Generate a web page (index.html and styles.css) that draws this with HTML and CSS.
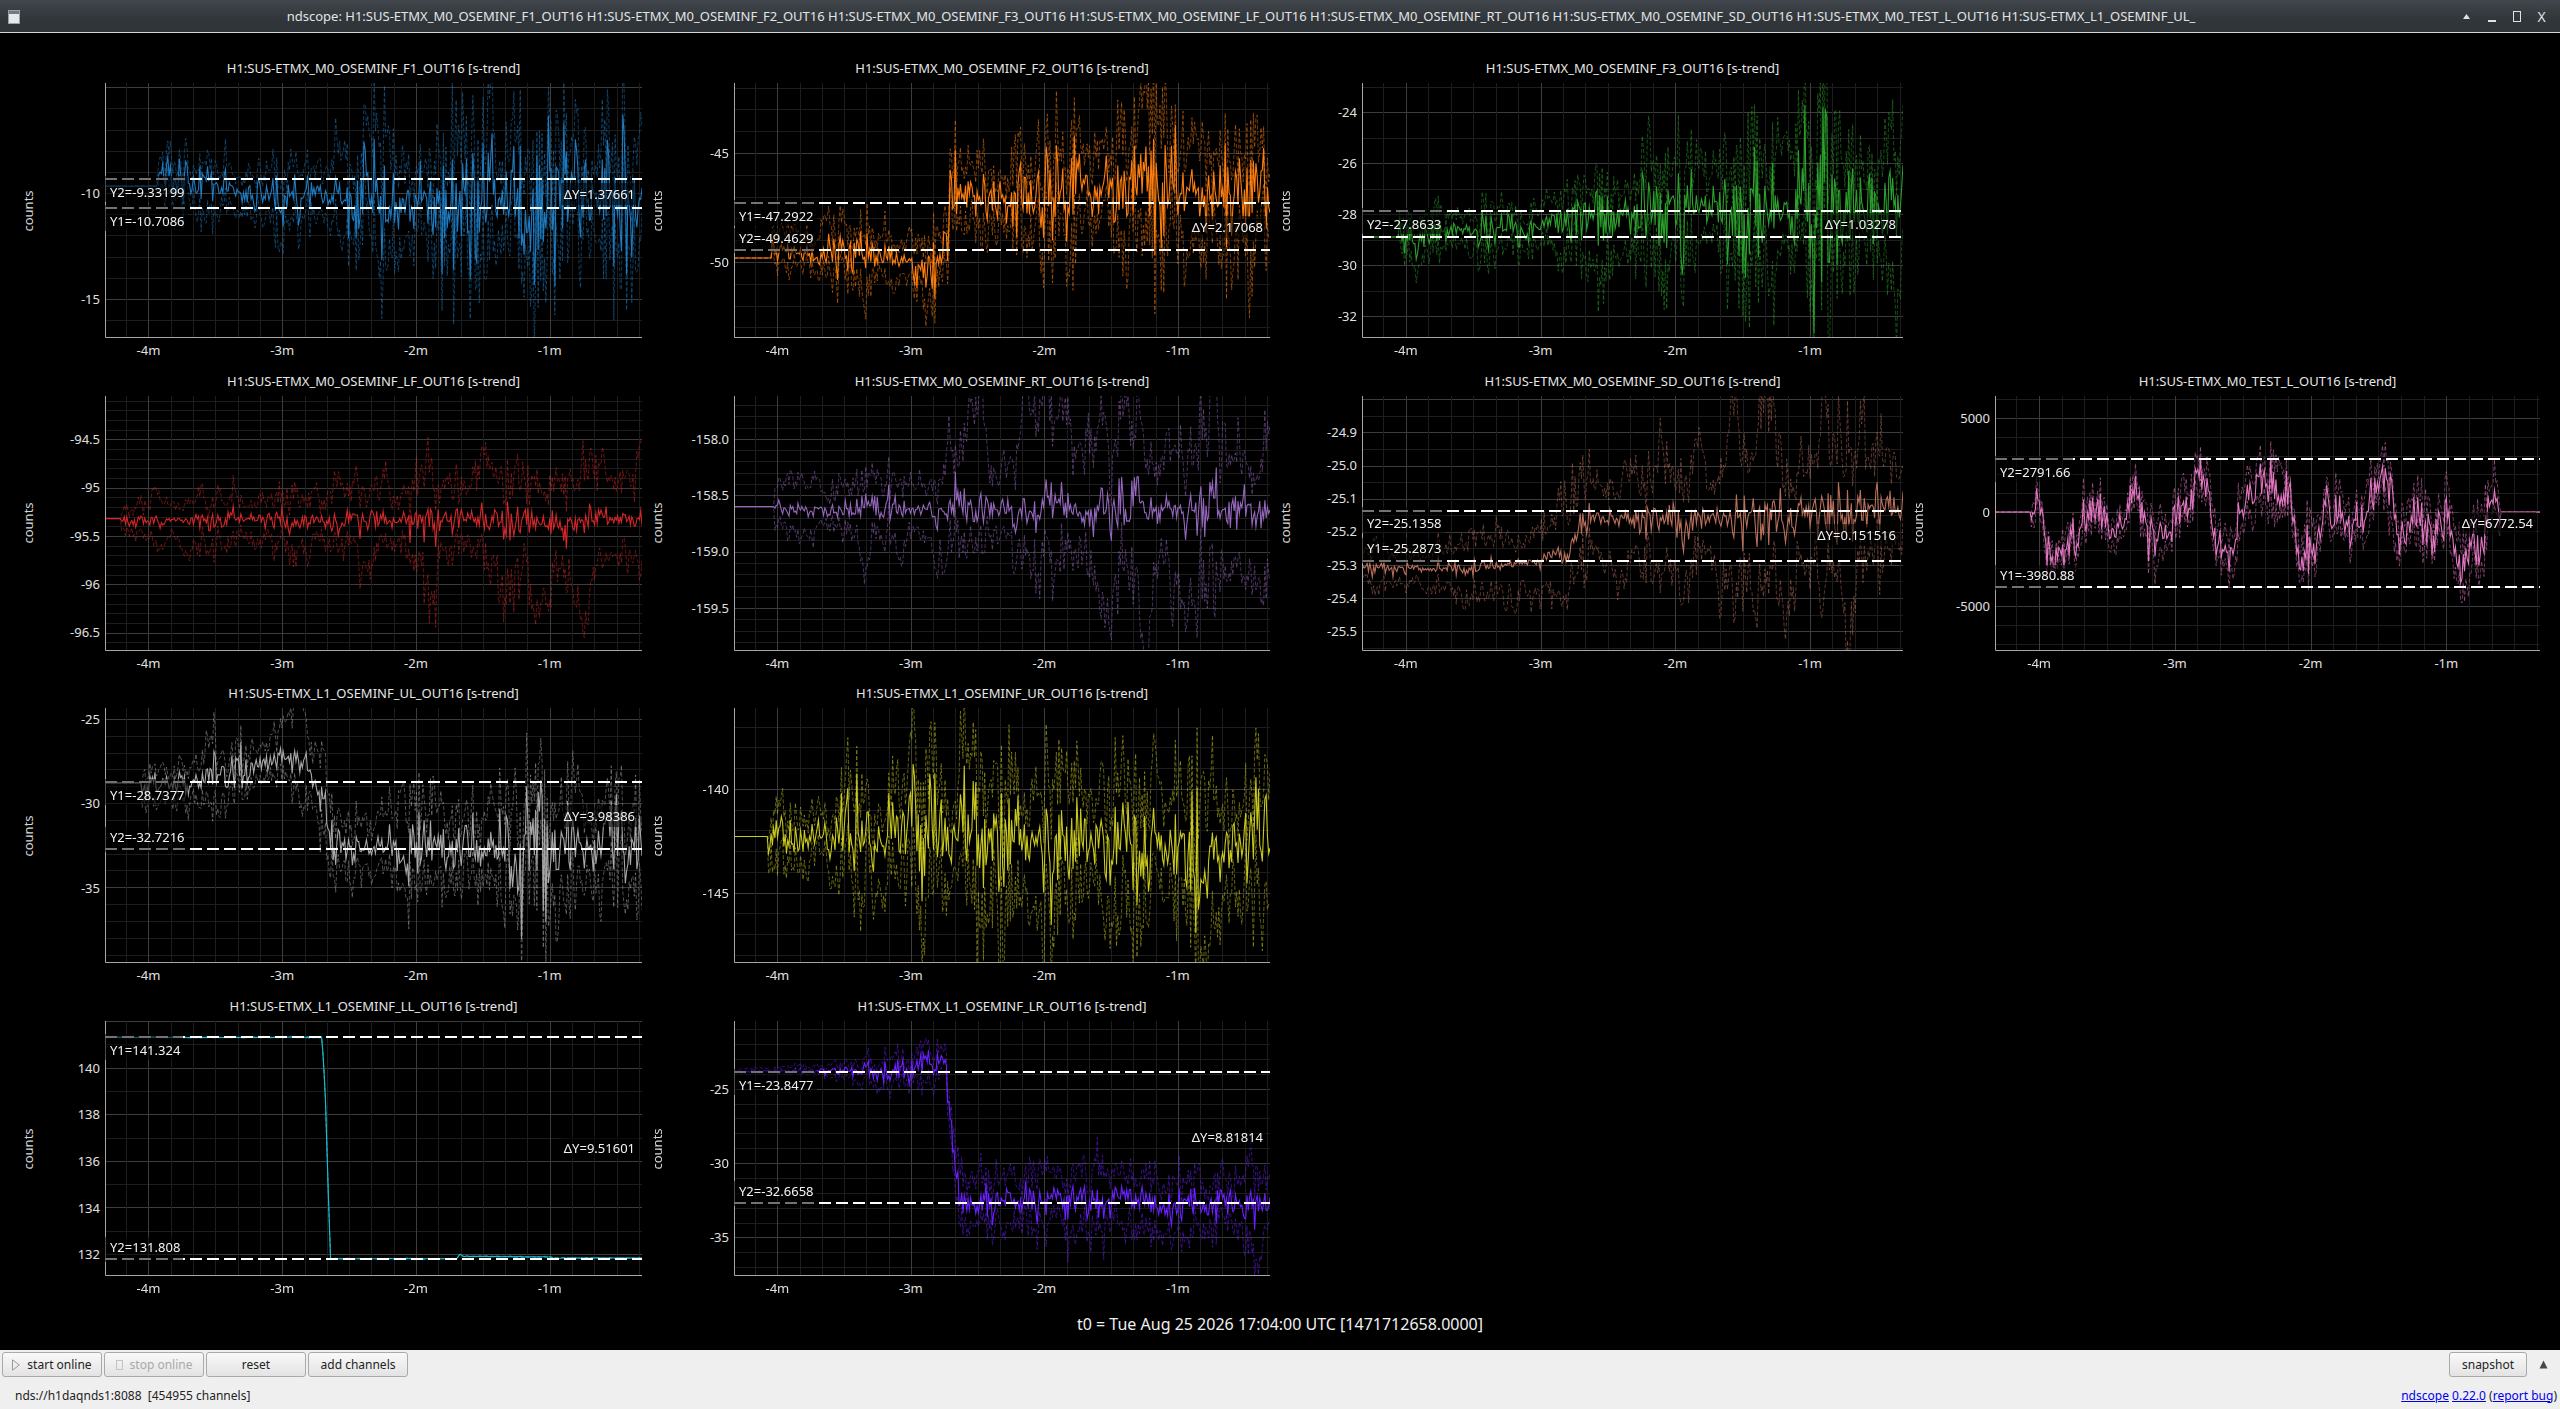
FILE: index.html
```html
<!DOCTYPE html>
<html lang="en">
<head>
<meta charset="utf-8">
<title>ndscope</title>
<link rel="stylesheet" href="styles.css">
</head>
<body>
<div class="window">
  <header class="titlebar">
    <div class="tb-icon">
      <svg width="12" height="14" viewBox="0 0 12 14"><rect x="0.5" y="0.5" width="11" height="13" fill="#e6e8ea" stroke="#9aa0a6"/><rect x="1" y="1" width="10" height="3" fill="#6d7a88"/></svg>
    </div>
    <div class="tb-title">ndscope: H1:SUS-ETMX_M0_OSEMINF_F1_OUT16 H1:SUS-ETMX_M0_OSEMINF_F2_OUT16 H1:SUS-ETMX_M0_OSEMINF_F3_OUT16 H1:SUS-ETMX_M0_OSEMINF_LF_OUT16 H1:SUS-ETMX_M0_OSEMINF_RT_OUT16 H1:SUS-ETMX_M0_OSEMINF_SD_OUT16 H1:SUS-ETMX_M0_TEST_L_OUT16 H1:SUS-ETMX_L1_OSEMINF_UL_</div>
    <div class="tb-controls">
      <span class="tbc"><svg width="7" height="5" viewBox="0 0 7 5"><path d="M3.5 0 L7 5 L0 5 Z" fill="#dfe1e3"/></svg></span>
      <span class="tbc"><span class="tbc-min"></span></span>
      <span class="tbc"><span class="tbc-max"></span></span>
      <span class="tbc tbc-x">X</span>
    </div>
  </header>

  <main class="main">
    <div class="plots">

      <section class="plot" data-id="f1">
        <h2 class="ptitle">H1:SUS-ETMX_M0_OSEMINF_F1_OUT16 [s-trend]</h2>
        <div class="ylabel"><span>counts</span></div>
        <div class="yaxis"><span class="ytick" data-v="-10">-10</span><span class="ytick" data-v="-15">-15</span></div>
        <div class="area"><canvas></canvas>
          <span class="clabel below" data-v="-9.33199">Y2=-9.33199</span>
          <span class="clabel below" data-v="-10.7086">Y1=-10.7086</span>
          <span class="dlabel" data-a="-9.33199" data-b="-10.7086">ΔY=1.37661</span>
        </div>
        <div class="xaxis"><span class="xtick" data-t="-4">-4m</span><span class="xtick" data-t="-3">-3m</span><span class="xtick" data-t="-2">-2m</span><span class="xtick" data-t="-1">-1m</span></div>
      </section>

      <section class="plot" data-id="f2">
        <h2 class="ptitle">H1:SUS-ETMX_M0_OSEMINF_F2_OUT16 [s-trend]</h2>
        <div class="ylabel"><span>counts</span></div>
        <div class="yaxis"><span class="ytick" data-v="-45">-45</span><span class="ytick" data-v="-50">-50</span></div>
        <div class="area"><canvas></canvas>
          <span class="clabel below" data-v="-47.2922">Y1=-47.2922</span>
          <span class="clabel above" data-v="-49.4629">Y2=-49.4629</span>
          <span class="dlabel" data-a="-47.2922" data-b="-49.4629">ΔY=2.17068</span>
        </div>
        <div class="xaxis"><span class="xtick" data-t="-4">-4m</span><span class="xtick" data-t="-3">-3m</span><span class="xtick" data-t="-2">-2m</span><span class="xtick" data-t="-1">-1m</span></div>
      </section>

      <section class="plot" data-id="f3">
        <h2 class="ptitle">H1:SUS-ETMX_M0_OSEMINF_F3_OUT16 [s-trend]</h2>
        <div class="ylabel"><span>counts</span></div>
        <div class="yaxis"><span class="ytick" data-v="-24">-24</span><span class="ytick" data-v="-26">-26</span><span class="ytick" data-v="-28">-28</span><span class="ytick" data-v="-30">-30</span><span class="ytick" data-v="-32">-32</span></div>
        <div class="area"><canvas></canvas>
          <span class="clabel below" data-v="-27.8633">Y2=-27.8633</span>
          <span class="dlabel" data-a="-27.8633" data-b="-28.89608">ΔY=1.03278</span>
        </div>
        <div class="xaxis"><span class="xtick" data-t="-4">-4m</span><span class="xtick" data-t="-3">-3m</span><span class="xtick" data-t="-2">-2m</span><span class="xtick" data-t="-1">-1m</span></div>
      </section>

      <div class="empty"></div>

      <section class="plot" data-id="lf">
        <h2 class="ptitle">H1:SUS-ETMX_M0_OSEMINF_LF_OUT16 [s-trend]</h2>
        <div class="ylabel"><span>counts</span></div>
        <div class="yaxis"><span class="ytick" data-v="-94.5">-94.5</span><span class="ytick" data-v="-95">-95</span><span class="ytick" data-v="-95.5">-95.5</span><span class="ytick" data-v="-96">-96</span><span class="ytick" data-v="-96.5">-96.5</span></div>
        <div class="area"><canvas></canvas></div>
        <div class="xaxis"><span class="xtick" data-t="-4">-4m</span><span class="xtick" data-t="-3">-3m</span><span class="xtick" data-t="-2">-2m</span><span class="xtick" data-t="-1">-1m</span></div>
      </section>

      <section class="plot" data-id="rt">
        <h2 class="ptitle">H1:SUS-ETMX_M0_OSEMINF_RT_OUT16 [s-trend]</h2>
        <div class="ylabel"><span>counts</span></div>
        <div class="yaxis"><span class="ytick" data-v="-158">-158.0</span><span class="ytick" data-v="-158.5">-158.5</span><span class="ytick" data-v="-159">-159.0</span><span class="ytick" data-v="-159.5">-159.5</span></div>
        <div class="area"><canvas></canvas></div>
        <div class="xaxis"><span class="xtick" data-t="-4">-4m</span><span class="xtick" data-t="-3">-3m</span><span class="xtick" data-t="-2">-2m</span><span class="xtick" data-t="-1">-1m</span></div>
      </section>

      <section class="plot" data-id="sd">
        <h2 class="ptitle">H1:SUS-ETMX_M0_OSEMINF_SD_OUT16 [s-trend]</h2>
        <div class="ylabel"><span>counts</span></div>
        <div class="yaxis"><span class="ytick" data-v="-24.9">-24.9</span><span class="ytick" data-v="-25">-25.0</span><span class="ytick" data-v="-25.1">-25.1</span><span class="ytick" data-v="-25.2">-25.2</span><span class="ytick" data-v="-25.3">-25.3</span><span class="ytick" data-v="-25.4">-25.4</span><span class="ytick" data-v="-25.5">-25.5</span></div>
        <div class="area"><canvas></canvas>
          <span class="clabel below" data-v="-25.1358">Y2=-25.1358</span>
          <span class="clabel above" data-v="-25.2873">Y1=-25.2873</span>
          <span class="dlabel" data-a="-25.1358" data-b="-25.2873">ΔY=0.151516</span>
        </div>
        <div class="xaxis"><span class="xtick" data-t="-4">-4m</span><span class="xtick" data-t="-3">-3m</span><span class="xtick" data-t="-2">-2m</span><span class="xtick" data-t="-1">-1m</span></div>
      </section>

      <section class="plot" data-id="test">
        <h2 class="ptitle">H1:SUS-ETMX_M0_TEST_L_OUT16 [s-trend]</h2>
        <div class="ylabel"><span>counts</span></div>
        <div class="yaxis"><span class="ytick" data-v="5000">5000</span><span class="ytick" data-v="0">0</span><span class="ytick" data-v="-5000">-5000</span></div>
        <div class="area"><canvas></canvas>
          <span class="clabel below" data-v="2791.66">Y2=2791.66</span>
          <span class="clabel above" data-v="-3980.88">Y1=-3980.88</span>
          <span class="dlabel" data-a="2791.66" data-b="-3980.88">ΔY=6772.54</span>
        </div>
        <div class="xaxis"><span class="xtick" data-t="-4">-4m</span><span class="xtick" data-t="-3">-3m</span><span class="xtick" data-t="-2">-2m</span><span class="xtick" data-t="-1">-1m</span></div>
      </section>

      <section class="plot" data-id="ul">
        <h2 class="ptitle">H1:SUS-ETMX_L1_OSEMINF_UL_OUT16 [s-trend]</h2>
        <div class="ylabel"><span>counts</span></div>
        <div class="yaxis"><span class="ytick" data-v="-25">-25</span><span class="ytick" data-v="-30">-30</span><span class="ytick" data-v="-35">-35</span></div>
        <div class="area"><canvas></canvas>
          <span class="clabel below" data-v="-28.7377">Y1=-28.7377</span>
          <span class="clabel above" data-v="-32.7216">Y2=-32.7216</span>
          <span class="dlabel" data-a="-28.7377" data-b="-32.7216">ΔY=3.98386</span>
        </div>
        <div class="xaxis"><span class="xtick" data-t="-4">-4m</span><span class="xtick" data-t="-3">-3m</span><span class="xtick" data-t="-2">-2m</span><span class="xtick" data-t="-1">-1m</span></div>
      </section>

      <section class="plot" data-id="ur">
        <h2 class="ptitle">H1:SUS-ETMX_L1_OSEMINF_UR_OUT16 [s-trend]</h2>
        <div class="ylabel"><span>counts</span></div>
        <div class="yaxis"><span class="ytick" data-v="-140">-140</span><span class="ytick" data-v="-145">-145</span></div>
        <div class="area"><canvas></canvas></div>
        <div class="xaxis"><span class="xtick" data-t="-4">-4m</span><span class="xtick" data-t="-3">-3m</span><span class="xtick" data-t="-2">-2m</span><span class="xtick" data-t="-1">-1m</span></div>
      </section>

      <div class="empty"></div>
      <div class="empty"></div>

      <section class="plot" data-id="ll">
        <h2 class="ptitle">H1:SUS-ETMX_L1_OSEMINF_LL_OUT16 [s-trend]</h2>
        <div class="ylabel"><span>counts</span></div>
        <div class="yaxis"><span class="ytick" data-v="140">140</span><span class="ytick" data-v="138">138</span><span class="ytick" data-v="136">136</span><span class="ytick" data-v="134">134</span><span class="ytick" data-v="132">132</span></div>
        <div class="area"><canvas></canvas>
          <span class="clabel below" data-v="141.324">Y1=141.324</span>
          <span class="clabel above" data-v="131.808">Y2=131.808</span>
          <span class="dlabel" data-a="141.324" data-b="131.808">ΔY=9.51601</span>
        </div>
        <div class="xaxis"><span class="xtick" data-t="-4">-4m</span><span class="xtick" data-t="-3">-3m</span><span class="xtick" data-t="-2">-2m</span><span class="xtick" data-t="-1">-1m</span></div>
      </section>

      <section class="plot" data-id="lr">
        <h2 class="ptitle">H1:SUS-ETMX_L1_OSEMINF_LR_OUT16 [s-trend]</h2>
        <div class="ylabel"><span>counts</span></div>
        <div class="yaxis"><span class="ytick" data-v="-25">-25</span><span class="ytick" data-v="-30">-30</span><span class="ytick" data-v="-35">-35</span></div>
        <div class="area"><canvas></canvas>
          <span class="clabel below" data-v="-23.8477">Y1=-23.8477</span>
          <span class="clabel above" data-v="-32.6658">Y2=-32.6658</span>
          <span class="dlabel" data-a="-23.8477" data-b="-32.6658">ΔY=8.81814</span>
        </div>
        <div class="xaxis"><span class="xtick" data-t="-4">-4m</span><span class="xtick" data-t="-3">-3m</span><span class="xtick" data-t="-2">-2m</span><span class="xtick" data-t="-1">-1m</span></div>
      </section>

    </div>
    <div class="t0">t0 = Tue Aug 25 2026 17:04:00 UTC [1471712658.0000]</div>
  </main>

  <footer class="toolbar">
    <div class="tool-row">
      <div class="btns">
        <button class="btn" type="button"><svg class="ico" width="8" height="12" viewBox="0 0 8 12"><path d="M0.5 0.8 L7.3 6 L0.5 11.2 Z" fill="none" stroke="#9a9a9a" stroke-width="1"/></svg>start online</button>
        <button class="btn" type="button" disabled><svg class="ico" width="7" height="10" viewBox="0 0 7 10"><rect x="0.5" y="0.5" width="6" height="9" fill="none" stroke="#c4c4c4" stroke-width="1"/></svg>stop online</button>
        <button class="btn" type="button">reset</button>
        <button class="btn" type="button">add channels</button>
      </div>
      <div class="tools-right">
        <button class="btn btn-snap" type="button">snapshot</button>
        <svg class="arrow-up" width="9" height="9" viewBox="0 0 9 9"><path d="M4.5 0.5 L8.5 8.5 L0.5 8.5 Z" fill="#474747"/></svg>
      </div>
    </div>
    <div class="status-row">
      <span class="status">nds://h1daqnds1:8088  [454955 channels]</span>
      <span class="version"><a href="#">ndscope</a> <a href="#">0.22.0</a> (<a href="#">report bug</a>)</span>
    </div>
  </footer>
</div>
<script src="app.js"></script>
</body>
</html>
```

FILE: styles.css
```css
* { box-sizing: border-box; }

html, body {
  margin: 0;
  padding: 0;
  background: #000;
  font-family: "Noto Sans", "DejaVu Sans", sans-serif;
  overflow: hidden;
}

.window {
  width: 2560px;
  height: 1409px;
  display: flex;
  flex-direction: column;
}

/* ---------- title bar ---------- */
.titlebar {
  flex: none;
  height: 33px;
  display: flex;
  align-items: center;
  background: linear-gradient(#41464c, #31363b 60%, #2f3439);
  border-bottom: 1px solid #d3d6d9;
  color: #e2e4e6;
  font-size: 13px;
}

.tb-icon {
  width: 28px;
  display: flex;
  justify-content: center;
  align-items: center;
  padding-top: 1px;
}

.tb-title {
  flex: 1;
  text-align: center;
  white-space: nowrap;
  overflow: hidden;
}

.tb-controls {
  display: flex;
  padding-right: 6px;
}

.tbc {
  width: 25px;
  height: 20px;
  display: flex;
  justify-content: center;
  align-items: center;
  color: #dfe1e3;
  font-size: 13px;
}

.tbc-min {
  width: 8px;
  height: 2px;
  margin-top: 9px;
  background: #dfe1e3;
}

.tbc-max {
  width: 8px;
  height: 11px;
  border: 1.5px solid #dfe1e3;
}

.tbc-x { font-size: 14px; }

/* ---------- main ---------- */
.main {
  flex: 1;
  display: flex;
  flex-direction: column;
  padding-top: 21px;
  background: #000;
}

.plots {
  display: grid;
  grid-template-columns: 642px 628px 633px 1fr;
  grid-template-rows: repeat(4, 308px);
  row-gap: 4.7px;
}

.plots > :nth-child(4n+1) { padding-left: 13px; }
.plots > :nth-child(4n) { padding-right: 20px; }

.plot {
  display: grid;
  grid-template-columns: 30px 62px 1fr;
  grid-template-rows: 28px 1px 255px 24px;
  color: #e0e0e0;
  font-size: 13px;
}

.ptitle {
  grid-column: 3;
  grid-row: 1;
  margin: 0;
  font-size: 13px;
  font-weight: normal;
  line-height: 28px;
  text-align: center;
  white-space: nowrap;
  color: #e6e6e6;
}

.ylabel {
  grid-column: 1;
  grid-row: 3;
  display: flex;
  align-items: center;
  justify-content: center;
  color: #d4d4d4;
}

.ylabel span {
  transform: rotate(-90deg);
  white-space: nowrap;
  line-height: 14px;
}

.yaxis {
  grid-column: 2;
  grid-row: 3;
  position: relative;
}

.ytick {
  position: absolute;
  right: 5px;
  transform: translateY(-50%);
  line-height: 16px;
  white-space: nowrap;
  color: #e0e0e0;
}

.area {
  grid-column: 3;
  grid-row: 3;
  position: relative;
  overflow: hidden;
}

.area canvas {
  display: block;
  width: 100%;
  height: 100%;
}

.clabel, .dlabel {
  position: absolute;
  white-space: nowrap;
  line-height: 16px;
  color: #f2f2f2;
  background: rgba(0, 0, 0, 0.55);
}

.clabel {
  left: 0;
  padding: 8px 3px 2px 5px;
}

.clabel.above {
  padding: 2px 3px 7px 5px;
  transform: translateY(-100%);
}

.dlabel {
  right: 4px;
  padding: 3px 3px;
  transform: translateY(-50%);
}

.xaxis {
  grid-column: 3;
  grid-row: 4;
  position: relative;
}

.xtick {
  position: absolute;
  top: 4px;
  transform: translateX(-50%);
  line-height: 16px;
  white-space: nowrap;
  color: #e0e0e0;
}

.t0 {
  flex: 1;
  display: flex;
  align-items: center;
  justify-content: center;
  color: #f0f0f0;
  font-size: 16px;
  padding-bottom: 2px;
}

/* ---------- toolbar ---------- */
.toolbar {
  flex: none;
  height: 59px;
  background: #efefef;
  font-size: 12px;
  color: #232323;
}

.tool-row {
  display: flex;
  justify-content: space-between;
  align-items: center;
  padding: 2px 12px 0 2px;
}

.btns {
  display: flex;
  gap: 2px;
}

.btn {
  height: 25px;
  min-width: 100px;
  padding: 0 8px;
  display: flex;
  align-items: center;
  justify-content: center;
  gap: 7px;
  font-family: "Noto Sans", "DejaVu Sans", sans-serif;
  font-size: 12px;
  color: #232323;
  background: linear-gradient(#f9f9f9, #e3e3e3);
  border: 1px solid #aaaaaa;
  border-radius: 3px;
}

.btn:disabled { color: #a9a9a9; }

.btn-snap {
  min-width: 78px;
  width: 78px;
}

.tools-right {
  display: flex;
  align-items: center;
  gap: 12px;
}

.arrow-up {
  display: block;
}

.status-row {
  display: flex;
  justify-content: space-between;
  align-items: center;
  height: 32px;
  padding: 4px 3px 0 15px;
}

.status { white-space: pre; }

.version a {
  color: #0000ee;
  text-decoration: underline;
}
```

FILE: app.js
```js
(function () {
  var T0 = -4.325, T1 = -0.31, N = 420;

  function mulberry32(a) {
    return function () {
      a |= 0; a = a + 0x6D2B79F5 | 0;
      var t = Math.imul(a ^ a >>> 15, 1 | a);
      t = t + Math.imul(t ^ t >>> 7, 61 | t) ^ t;
      return ((t ^ t >>> 14) >>> 0) / 4294967296;
    };
  }

  function kp(arr) {
    if (typeof arr === 'number') return function () { return arr; };
    return function (f) {
      if (f <= arr[0][0]) return arr[0][1];
      for (var i = 1; i < arr.length; i++) {
        if (f <= arr[i][0]) {
          var f0 = arr[i - 1][0], v0 = arr[i - 1][1], f1 = arr[i][0], v1 = arr[i][1];
          return v0 + (v1 - v0) * (f - f0) / (f1 - f0);
        }
      }
      return arr[arr.length - 1][1];
    };
  }

  var CFG = {
    f1: { color: '#1f7bc0', range: [-16.84, -4.8], major: 5, minor: 1, start: 0.096, flat: -9.67,
      base: [[0.096, -9.0], [0.15, -9.4], [0.25, -10.0], [0.5, -10.4], [0.7, -10.3], [1, -10.5]],
      amp: [[0, 0.35], [0.3, 0.45], [0.72, 1.8], [1, 1.6]],
      spr: [[0, 0.8], [0.2, 1.0], [0.75, 2.8], [1, 2.4]], burst: 19,
      cursors: [-9.33199, -10.7086], seed: 11 },
    f2: { color: '#ff7f0e', range: [-53.49, -41.79], major: 5, minor: 1, start: 0.07, flat: -49.82,
      base: [[0.07, -49.6], [0.25, -49.6], [0.33, -50.2], [0.38, -50.6], [0.395, -49.6], [0.405, -47.3], [0.7, -47.0], [1, -46.8]],
      amp: [[0, 0.35], [0.3, 0.45], [0.4, 0.7], [0.8, 1.5], [1, 1.3]],
      spr: [[0, 0.8], [0.35, 1.2], [0.8, 2.4], [1, 2.2]], burst: 17,
      cursors: [-47.2922, -49.4629], seed: 23 },
    f3: { color: '#2ca02c', range: [-32.86, -22.86], major: 2, minor: 1, start: 0.068, flat: -28.9,
      base: [[0.068, -28.8], [0.3, -28.5], [0.4, -28.2], [0.6, -27.9], [1, -27.8]],
      amp: [[0, 0.25], [0.35, 0.35], [0.8, 1.3], [1, 1.1]],
      spr: [[0, 0.6], [0.3, 0.9], [0.78, 2.5], [1, 2.1]], burst: 21,
      cursors: [-27.8633, -28.89608], seed: 37 },
    lf: { color: '#d62728', range: [-96.69, -94.05], major: 0.5, minor: 0.1, start: 0.031, flat: -95.32,
      base: -95.33,
      amp: [[0, 0.025], [0.1, 0.035], [0.7, 0.1], [1, 0.08]],
      spr: [[0, 0.12], [0.1, 0.18], [0.9, 0.6], [1, 0.55]], burst: 23,
      cursors: [], seed: 41 },
    rt: { color: '#9467bd', range: [-159.88, -157.62], major: 0.5, minor: 0.1, start: 0.076, flat: -158.6,
      base: -158.63,
      amp: [[0, 0.02], [0.1, 0.03], [0.7, 0.13], [1, 0.12]],
      spr: [[0, 0.1], [0.1, 0.18], [0.9, 0.75], [1, 0.7]], burst: 20,
      cursors: [], seed: 53 },
    sd: { color: '#b8705b', range: [-25.56, -24.79], major: 0.1, minor: 0.05, start: 0, flat: -25.3,
      base: [[0, -25.31], [0.2, -25.31], [0.3, -25.29], [0.38, -25.27], [0.40, -25.17], [0.7, -25.15], [1, -25.13]],
      amp: [[0, 0.008], [0.35, 0.012], [0.8, 0.05], [1, 0.045]],
      spr: [[0, 0.04], [0.1, 0.07], [0.35, 0.14], [0.9, 0.24], [1, 0.2]], burst: 18,
      cursors: [-25.1358, -25.2873], seed: 67 },
    test: { color: '#e377c2', range: [-7386, 6166], major: 5000, minor: 1000, start: 0.066, end: 0.927, flat: 0,
      base: [[0.066, 0], [0.081, 500], [0.097, -2500], [0.12, -2000], [0.151, -1500], [0.181, 500], [0.212, -800], [0.259, 1500],
        [0.29, -1500], [0.32, -1000], [0.367, 1200], [0.382, 2500], [0.405, -1500], [0.429, -2500], [0.459, 1000], [0.49, 2000],
        [0.514, 1000], [0.544, 0], [0.56, -2500], [0.591, -1500], [0.606, 500], [0.637, -1000], [0.676, -500], [0.714, 2800],
        [0.745, -2000], [0.768, 500], [0.799, -1000], [0.83, 0], [0.853, -3500], [0.876, -1500], [0.892, -2000], [0.915, 1500], [0.927, 0]],
      amp: 650, spr: [[0, 600], [0.5, 1000], [1, 1100]], burst: 0,
      cursors: [2791.66, -3980.88], seed: 71 },
    ul: { color: '#a8a8a8', range: [-39.5, -24.35], major: 5, minor: 1, start: 0.069, flat: -28.8,
      base: [[0.069, -28.9], [0.15, -28.8], [0.25, -28.2], [0.33, -27.3], [0.38, -27.6], [0.40, -29.5], [0.42, -32.5], [0.7, -32.8], [1, -32.6]],
      amp: [[0, 0.5], [0.45, 0.6], [0.8, 1.6], [1, 1.4]],
      spr: [[0, 1.0], [0.3, 1.5], [0.8, 3.0], [1, 2.6]], burst: 16,
      cursors: [-28.7377, -32.7216], seed: 83 },
    ur: { color: '#c9c91f', range: [-148.4, -136.1], major: 5, minor: 1, start: 0.064, flat: -142.3,
      base: -142.4,
      amp: [[0, 0.4], [0.1, 0.5], [0.4, 1.4], [1, 1.4]],
      spr: [[0, 1.0], [0.1, 1.3], [0.4, 3.0], [1, 3.0]], burst: 24,
      cursors: [], seed: 97 },
    ll: { color: '#17becf', range: [131.06, 142.0], major: 2, minor: 1, start: 0, flat: 141.3,
      base: [[0, 141.3], [0.404, 141.3], [0.41, 139.0], [0.416, 134.5], [0.42, 131.8], [0.655, 131.8], [0.661, 132.0], [0.667, 131.9], [0.83, 131.88], [0.835, 131.83], [1, 131.83]],
      amp: 0.006, spr: 0.02, burst: 0,
      cursors: [141.324, 131.808], seed: 101 },
    lr: { color: '#6a20ff', range: [-37.6, -20.44], major: 5, minor: 1, start: 0, flat: -23.85,
      base: [[0, -23.85], [0.25, -23.8], [0.36, -23.5], [0.395, -23.6], [0.402, -27], [0.42, -32.6], [1, -32.8]],
      amp: [[0, 0.05], [0.15, 0.1], [0.35, 0.55], [0.4, 0.6], [0.42, 0.6], [1, 0.6]],
      spr: [[0, 0.15], [0.15, 0.3], [0.36, 1.2], [0.4, 1.0], [0.43, 1.6], [0.7, 2.0], [1, 2.0]], burst: 0,
      cursors: [-23.8477, -32.6658], seed: 113 }
  };

  function series(c) {
    var rnd = mulberry32(c.seed);
    function g() {
      var u = rnd() || 1e-9, v = rnd();
      return Math.sqrt(-2 * Math.log(u)) * Math.cos(2 * Math.PI * v);
    }
    var base = kp(c.base), amp = kp(c.amp), spr = kp(c.spr);
    var end = c.end === undefined ? 2 : c.end;
    var pts = [];
    var ar = 0, ar2 = 0, ar3 = 0;
    for (var i = 0; i < N; i++) {
      var f = i / (N - 1);
      if (f < c.start || f > end) { pts.push([f, c.flat, c.flat, c.flat]); continue; }
      ar = 0.85 * ar + 0.53 * g();
      ar2 = 0.9 * ar2 + 0.44 * g();
      ar3 = 0.9 * ar3 + 0.44 * g();
      var m = c.burst ? (0.4 + 0.9 * Math.abs(Math.sin(f * c.burst + c.seed))) : 1;
      var b = base(f), a = amp(f) * m, s = spr(f) * (0.6 + 0.5 * m);
      var mean = b + a * (0.9 * g() + 0.35 * ar);
      var hi = mean + s * (0.3 + 0.45 * Math.abs(ar2) + 0.3 * rnd());
      var lo = mean - s * (0.3 + 0.45 * Math.abs(ar3) + 0.3 * rnd());
      pts.push([f, mean, lo, hi]);
    }
    return pts;
  }

  function draw(plot) {
    var c = CFG[plot.dataset.id];
    if (!c) return;
    var area = plot.querySelector('.area');
    var cv = area.querySelector('canvas');
    var W = area.clientWidth, H = area.clientHeight;
    var dpr = window.devicePixelRatio || 1;
    cv.width = Math.round(W * dpr);
    cv.height = Math.round(H * dpr);
    var ctx = cv.getContext('2d');
    ctx.scale(dpr, dpr);
    var vmin = c.range[0], vmax = c.range[1];
    function X(f) { return f * W; }
    function Y(v) { return (vmax - v) / (vmax - vmin) * H; }
    function tf(t) { return (t - T0) / (T1 - T0); }

    ctx.lineWidth = 1;
    var k, y, x;
    var kmin = Math.ceil(vmin / c.minor - 1e-6), kmax = Math.floor(vmax / c.minor + 1e-6);
    var ratio = Math.round(c.major / c.minor);
    for (k = kmin; k <= kmax; k++) {
      var isMajor = (((k % ratio) + ratio) % ratio) === 0;
      ctx.strokeStyle = isMajor ? '#3d3d3d' : '#1d1d1d';
      y = Math.round(Y(k * c.minor)) + 0.5;
      ctx.beginPath(); ctx.moveTo(0, y); ctx.lineTo(W, y); ctx.stroke();
    }
    for (k = Math.ceil(T0 * 6); k <= Math.floor(T1 * 6); k++) {
      ctx.strokeStyle = (k % 6 === 0) ? '#3d3d3d' : '#1d1d1d';
      x = Math.round(X(tf(k / 6))) + 0.5;
      ctx.beginPath(); ctx.moveTo(x, 0); ctx.lineTo(x, H); ctx.stroke();
    }

    var pts = series(c);
    function line(idx) {
      ctx.beginPath();
      for (var i = 0; i < pts.length; i++) {
        var px = X(pts[i][0]), py = Y(pts[i][idx]);
        if (i === 0) ctx.moveTo(px, py); else ctx.lineTo(px, py);
      }
      ctx.stroke();
    }
    ctx.save();
    ctx.strokeStyle = c.color;
    ctx.globalAlpha = 0.48;
    ctx.lineWidth = 1;
    ctx.setLineDash([4, 2]);
    line(2); line(3);
    ctx.restore();
    ctx.save();
    ctx.strokeStyle = c.color;
    ctx.lineWidth = 1.1;
    line(1);
    ctx.restore();

    ctx.strokeStyle = '#a6a6a6';
    ctx.lineWidth = 1;
    ctx.beginPath(); ctx.moveTo(0.5, 0); ctx.lineTo(0.5, H - 0.5); ctx.lineTo(W, H - 0.5); ctx.stroke();

    ctx.save();
    ctx.strokeStyle = '#ffffff';
    ctx.lineWidth = 2;
    ctx.setLineDash([12, 5]);
    c.cursors.forEach(function (v) {
      var cy = Math.round(Y(v));
      ctx.beginPath(); ctx.moveTo(0, cy); ctx.lineTo(W, cy); ctx.stroke();
    });
    ctx.restore();

    plot.querySelectorAll('.ytick').forEach(function (el) {
      el.style.top = Y(parseFloat(el.dataset.v)) + 'px';
    });
    plot.querySelectorAll('.xtick').forEach(function (el) {
      el.style.left = X(tf(parseFloat(el.dataset.t))) + 'px';
    });
    plot.querySelectorAll('.clabel').forEach(function (el) {
      var yy = Y(parseFloat(el.dataset.v));
      el.style.top = (el.classList.contains('above') ? yy + 3 : yy - 3) + 'px';
    });
    plot.querySelectorAll('.dlabel').forEach(function (el) {
      el.style.top = ((Y(parseFloat(el.dataset.a)) + Y(parseFloat(el.dataset.b))) / 2) + 'px';
    });
  }

  document.querySelectorAll('.plot').forEach(draw);
})();
```
